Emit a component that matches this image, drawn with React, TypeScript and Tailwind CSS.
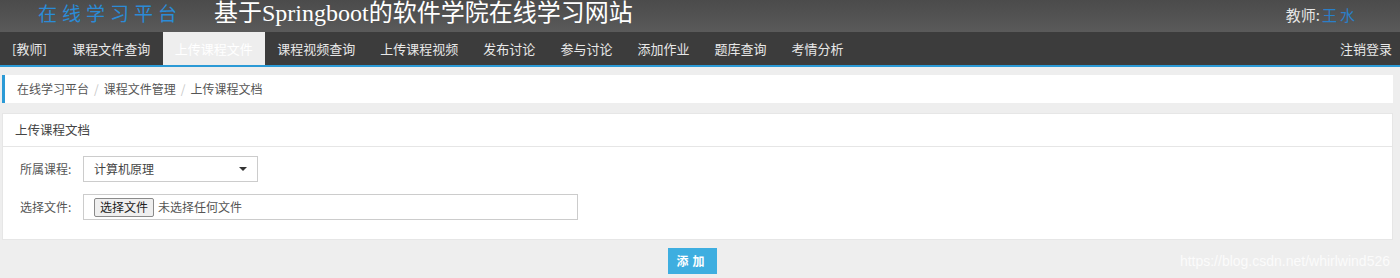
import React from 'react';

const navItems = [
  '课程文件查询',
  '上传课程文件',
  '课程视频查询',
  '上传课程视频',
  '发布讨论',
  '参与讨论',
  '添加作业',
  '题库查询',
  '考情分析',
];

const sans = { fontFamily: '"Noto Sans CJK SC", "Liberation Sans", sans-serif' };

export default function App() {
  return (
    <div className="relative h-[278px] w-[1400px] overflow-hidden bg-[#eeeeee]" style={sans}>
      {/* top header */}
      <div className="flex h-8 items-start bg-gradient-to-b from-[#4b4b4b] to-[#5a5a5a]">
        <div className="ml-[38px] mt-[3px] text-[19px] leading-[20px] tracking-[5px] text-[#2b8bd6]">在线学习平台</div>
        <div
          className="ml-[32px] mt-[1px] text-[24px] leading-[24px] text-white"
          style={{ fontFamily: '"Liberation Serif", "Noto Sans CJK SC", serif' }}
        >
          基于Springboot的软件学院在线学习网站
        </div>
        <div className="ml-auto mr-[42px] mt-[7px] text-[15px] leading-[16px] text-[#e6e6e6]">
          教师:<span className="ml-[2px] tracking-[3px] text-[#2b7fc8]">王水</span>
        </div>
      </div>

      {/* nav */}
      <div className="flex h-[33px] items-stretch bg-[#3c3c3c] text-[13px] text-[#e8e8e8]">
        <div className="flex items-center pl-3 pr-[13px]">[教师]</div>
        {navItems.map((item) =>
          item === '上传课程文件' ? (
            <div key={item} className="flex items-center bg-[#eeeeee] px-[12px] text-white">
              {item}
            </div>
          ) : (
            <div key={item} className="flex items-center px-[12.5px]">
              {item}
            </div>
          )
        )}
        <div className="ml-auto flex items-center pr-2">注销登录</div>
      </div>
      <div className="h-[2px] bg-[#2b9ad6]" />

      <div className="pl-[2px] pr-[7px]">
        {/* breadcrumb */}
        <div className="mt-2 flex h-[28px] items-center border-l-[3px] border-[#2b9ad6] bg-white pl-3 text-[12px] text-[#555]">
          <span>在线学习平台</span>
          <span className="px-[5px] text-[#c8c8c8]">/</span>
          <span>课程文件管理</span>
          <span className="px-[5px] text-[#c8c8c8]">/</span>
          <span>上传课程文档</span>
        </div>

        {/* panel */}
        <div className="mt-[10px] border border-[#e6e6e6] bg-white">
          <div className="flex h-[33px] items-center border-b border-[#e6e6e6] pl-3 text-[12.5px] text-[#444]">
            上传课程文档
          </div>
          <div className="px-[17px] pb-[19px] pt-[9px] text-[12px] text-[#555]">
            <div className="flex items-center">
              <div className="w-[63px]">所属课程:</div>
              <div className="flex h-[26px] w-[175px] items-center justify-between border border-[#cccccc] pl-[10px] pr-[10px] text-[#444]">
                <span>计算机原理</span>
                <span className="h-0 w-0 border-x-[4px] border-t-[4px] border-x-transparent border-t-[#333]" />
              </div>
            </div>
            <div className="mt-3 flex items-center">
              <div className="w-[63px]">选择文件:</div>
              <div className="flex h-[26px] w-[495px] items-center border border-[#cccccc] pl-[10px] text-[#555]">
                <span className="flex h-[19px] items-center rounded-[2px] border border-[#8a8a8a] bg-[#efefef] px-[5px] text-[#222]">
                  选择文件
                </span>
                <span className="ml-1">未选择任何文件</span>
              </div>
            </div>
          </div>
        </div>

        {/* submit */}
        <div className="mt-2 flex justify-center pr-[10px]">
          <button className="h-[26px] w-[49px] bg-[#3eaee0] text-[12px] font-bold tracking-[4px] text-white">
            添加
          </button>
        </div>
      </div>

      <div
        className="absolute bottom-[6px] right-[10px] text-[14px] text-[#fbfbfb]"
        style={{ fontFamily: '"Liberation Sans", sans-serif' }}
      >
        https://blog.csdn.net/whirlwind526
      </div>
    </div>
  );
}
